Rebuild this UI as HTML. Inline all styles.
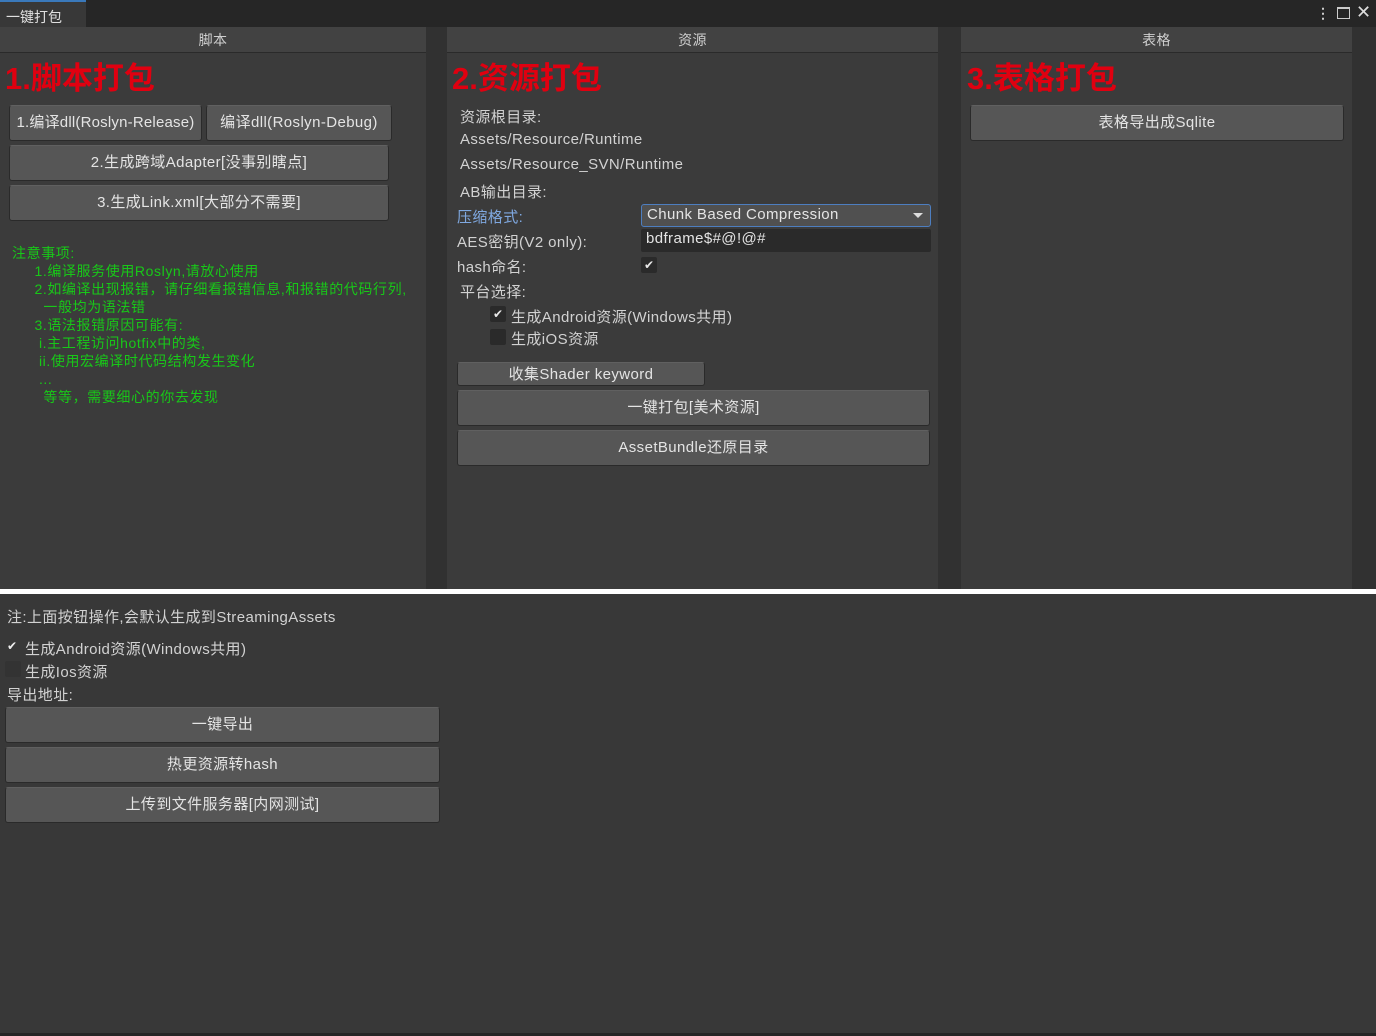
<!DOCTYPE html>
<html><head><meta charset="utf-8"><style>
*{margin:0;padding:0;box-sizing:border-box}
body{width:1376px;height:1036px;background:#383838;font-family:"Liberation Sans","Noto Sans CJK SC",sans-serif;color:#d2d2d2;font-size:15px;letter-spacing:0.4px;position:relative;overflow:hidden}
.a{position:absolute;white-space:nowrap}
.top{left:0;top:0;width:1376px;height:27px;background:#262626}
.tab{left:0;top:0;width:86px;height:27px;background:#383838;border-top:2px solid #3a79bb;color:#e0e0e0;font-size:14px;padding:5px 0 0 6px;letter-spacing:0}
.col{background:#3b3b3b;top:27px;height:562px}
.gap{background:#313131;top:27px;height:562px}
.hd{position:absolute;left:0;right:0;top:0;height:26px;background:#424242;border-bottom:1px solid #2a2a2a;text-align:center;line-height:26px;color:#cfcfcf;font-size:14px}
.red{color:#e00010;font-size:31px;font-weight:bold;letter-spacing:0}
.btn{background:#565656;border:1px solid #2a2a2a;border-top-color:#606060;border-radius:3px;text-align:center;color:#e4e4e4}
.g{color:#18c818;font-size:14px;letter-spacing:0.6px}
.cb{width:16px;height:16px;background:#2a2a2a;border-radius:2px;color:#e8e8e8;font-size:12px;line-height:16px;text-align:center;letter-spacing:0}
</style></head><body>
<div class="a top"></div>
<div class="a tab">一键打包</div>
<div class="a" style="left:1316px;top:5px;color:#ccc;font-size:14px;font-weight:bold">⋮</div>
<div class="a" style="left:1337px;top:7px;width:13px;height:12px;border:1.5px solid #ccc;border-top-width:2.5px"></div>
<div class="a" style="left:1356px;top:2px;color:#ddd;font-size:18px">✕</div>

<div class="a col" style="left:0;width:426px"><div class="hd">脚本</div></div>
<div class="a gap" style="left:426px;width:21px"></div>
<div class="a col" style="left:447px;width:491px"><div class="hd">资源</div></div>
<div class="a gap" style="left:938px;width:23px"></div>
<div class="a col" style="left:961px;width:391px"><div class="hd">表格</div></div>
<div class="a gap" style="left:1352px;width:24px"></div>

<div class="a red" style="left:5px;top:53px">1.脚本打包</div>
<div class="a btn" style="left:9px;top:105px;width:193px;height:36px;line-height:34px;letter-spacing:0.2px">1.编译dll(Roslyn-Release)</div>
<div class="a btn" style="left:206px;top:105px;width:186px;height:36px;line-height:34px">编译dll(Roslyn-Debug)</div>
<div class="a btn" style="left:9px;top:145px;width:380px;height:36px;line-height:34px">2.生成跨域Adapter[没事别瞎点]</div>
<div class="a btn" style="left:9px;top:185px;width:380px;height:36px;line-height:34px">3.生成Link.xml[大部分不需要]</div>
<div class="a g" style="left:12px;top:244px;line-height:18px">注意事项:<br>&nbsp;&nbsp;&nbsp;&nbsp;&nbsp;1.编译服务使用Roslyn,请放心使用<br>&nbsp;&nbsp;&nbsp;&nbsp;&nbsp;2.如编译出现报错，请仔细看报错信息,和报错的代码行列,<br>&nbsp;&nbsp;&nbsp;&nbsp;&nbsp;&nbsp;&nbsp;一般均为语法错<br>&nbsp;&nbsp;&nbsp;&nbsp;&nbsp;3.语法报错原因可能有:<br>&nbsp;&nbsp;&nbsp;&nbsp;&nbsp;&nbsp;i.主工程访问hotfix中的类,<br>&nbsp;&nbsp;&nbsp;&nbsp;&nbsp;&nbsp;ii.使用宏编译时代码结构发生变化<br>&nbsp;&nbsp;&nbsp;&nbsp;&nbsp;&nbsp;...<br>&nbsp;&nbsp;&nbsp;&nbsp;&nbsp;&nbsp;&nbsp;等等，需要细心的你去发现</div>

<div class="a red" style="left:452px;top:53px">2.资源打包</div>
<div class="a" style="left:460px;top:106px">资源根目录:</div>
<div class="a" style="left:460px;top:131px">Assets/Resource/Runtime</div>
<div class="a" style="left:460px;top:156px">Assets/Resource_SVN/Runtime</div>
<div class="a" style="left:460px;top:181px">AB输出目录:</div>
<div class="a" style="left:457px;top:206px;color:#7fa8e0">压缩格式:</div>
<div class="a" style="left:641px;top:204px;width:290px;height:23px;background:#505050;border:1px solid #4d7ec0;border-radius:3px;padding:1px 5px;color:#e4e4e4">Chunk Based Compression<span style="position:absolute;right:7px;top:8px;border:5px solid transparent;border-top:5px solid #ddd"></span></div>
<div class="a" style="left:457px;top:231px">AES密钥(V2 only):</div>
<div class="a" style="left:641px;top:229px;width:290px;height:23px;background:#2a2a2a;border-radius:2px;padding:1px 5px;color:#e4e4e4">bdframe$#@!@#</div>
<div class="a" style="left:457px;top:256px">hash命名:</div>
<div class="a cb" style="left:641px;top:257px">✔</div>
<div class="a" style="left:460px;top:281px">平台选择:</div>
<div class="a cb" style="left:490px;top:306px">✔</div>
<div class="a" style="left:511px;top:306px">生成Android资源(Windows共用)</div>
<div class="a cb" style="left:490px;top:329px"></div>
<div class="a" style="left:511px;top:328px">生成iOS资源</div>
<div class="a btn" style="left:457px;top:362px;width:248px;height:24px;line-height:23px">收集Shader keyword</div>
<div class="a btn" style="left:457px;top:390px;width:473px;height:36px;line-height:34px">一键打包[美术资源]</div>
<div class="a btn" style="left:457px;top:430px;width:473px;height:36px;line-height:34px">AssetBundle还原目录</div>

<div class="a red" style="left:967px;top:53px">3.表格打包</div>
<div class="a btn" style="left:970px;top:105px;width:374px;height:36px;line-height:34px">表格导出成Sqlite</div>

<div class="a" style="left:0;top:589px;width:1376px;height:5px;background:#fff"></div>
<div class="a" style="left:7px;top:606px">注:上面按钮操作,会默认生成到StreamingAssets</div>
<div class="a" style="left:7px;top:639px;color:#eee;font-size:12px">✔</div>
<div class="a" style="left:25px;top:638px">生成Android资源(Windows共用)</div>
<div class="a cb" style="left:5px;top:661px;background:#333"></div>
<div class="a" style="left:25px;top:661px">生成Ios资源</div>
<div class="a" style="left:7px;top:684px">导出地址:</div>
<div class="a btn" style="left:5px;top:707px;width:435px;height:36px;line-height:34px">一键导出</div>
<div class="a btn" style="left:5px;top:747px;width:435px;height:36px;line-height:34px">热更资源转hash</div>
<div class="a btn" style="left:5px;top:787px;width:435px;height:36px;line-height:34px">上传到文件服务器[内网测试]</div>
<div class="a" style="left:0;top:1033px;width:1376px;height:3px;background:#262626"></div>
</body></html>
